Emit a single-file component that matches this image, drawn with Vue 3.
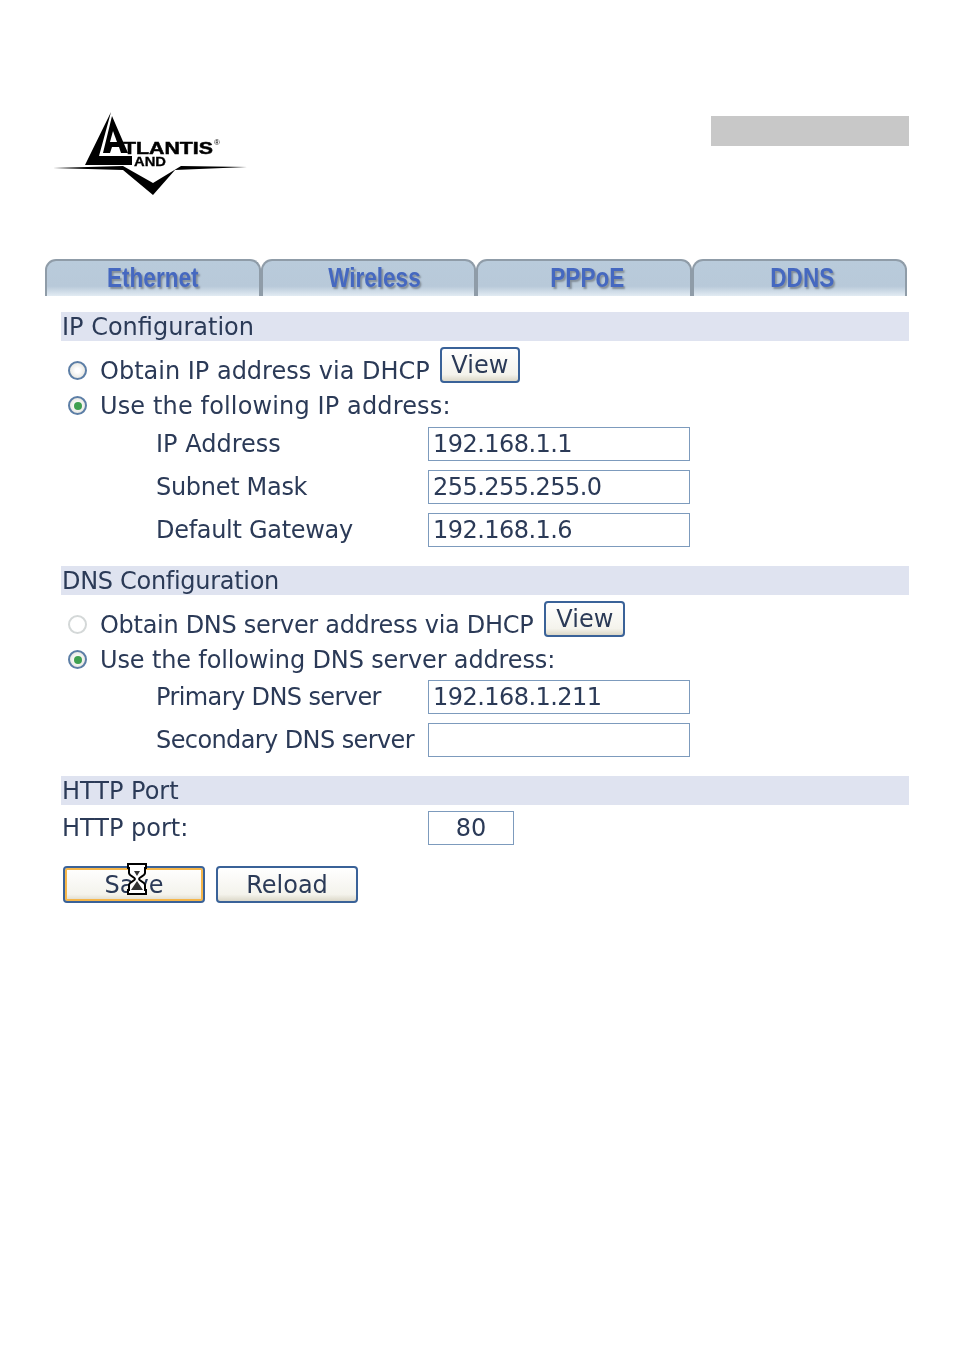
<template>
  <main class="page">
    <header class="top">
      <svg class="logo" width="196" height="86" viewBox="0 0 196 86">
        <polygon points="58,2 32,55 79,55 79,46 46,46" fill="#000" />
        <polygon points="59,6 50,43 57,43 59,37 66,37 68,43 75,43" fill="#000" />
        <polygon points="60,21 64,32 57,32" fill="#fff" />
        <text x="70" y="44" class="logo-main" textLength="90" lengthAdjust="spacingAndGlyphs">TLANTIS</text>
        <text x="81" y="55.5" class="logo-and" textLength="32" lengthAdjust="spacingAndGlyphs">AND</text>
        <text x="161" y="35" class="logo-reg">®</text>
        <polygon points="0,58 70,56 100,73 128,56 194,57 122,60 100,85 70,60" fill="#000" />
      </svg>
      <div class="grey-box"></div>
    </header>

    <nav class="tabs">
      <div v-for="tab in tabs" :key="tab" class="tab"><span>{{ tab }}</span></div>
    </nav>

    <section class="block">
      <h2>IP Configuration</h2>
      <div class="radio-row first">
        <span class="radio"></span>
        <span>Obtain IP address via DHCP</span>
        <button class="btn view">View</button>
      </div>
      <div class="radio-row second">
        <span class="radio on"></span>
        <span class="wide">Use the following IP address:</span>
      </div>
      <div v-for="f in ipFields" :key="f.label" class="field">
        <label :class="f.fit">{{ f.label }}</label>
        <div class="input">{{ f.value }}</div>
      </div>
    </section>

    <section class="block dns">
      <h2 class="tight">DNS Configuration</h2>
      <div class="radio-row first">
        <span class="radio off"></span>
        <span class="tight">Obtain DNS server address via DHCP</span>
        <button class="btn view">View</button>
      </div>
      <div class="radio-row second">
        <span class="radio on"></span>
        <span class="slight">Use the following DNS server address:</span>
      </div>
      <div v-for="f in dnsFields" :key="f.label" class="field">
        <label :class="f.fit">{{ f.label }}</label>
        <div class="input">{{ f.value }}</div>
      </div>
    </section>

    <section class="block http">
      <h2>HTTP Port</h2>
      <div class="port-row">
        <label>HTTP port:</label>
        <div class="input port">80</div>
      </div>
    </section>

    <div class="actions">
      <button class="btn big focus">
        Save
        <svg class="hourglass" width="20" height="32" viewBox="0 0 20 32">
          <path d="M1 1h18v4h-1v5c0 3-6 4-6 6s6 3 6 6v5h1v4H1v-4h1v-5c0-3 6-4 6-6s-6-3-6-6V5H1z" fill="#fff" stroke="#000" stroke-width="2" />
          <path d="M7 8h6l-3 5zM10 18l6 9H4z" fill="#333" />
        </svg>
      </button>
      <button class="btn big">Reload</button>
    </div>
  </main>
</template>

<script setup>
const tabs = ["Ethernet", "Wireless", "PPPoE", "DDNS"]

const ipFields = [
  { label: "IP Address", value: "192.168.1.1", fit: "" },
  { label: "Subnet Mask", value: "255.255.255.0", fit: "tight" },
  { label: "Default Gateway", value: "192.168.1.6", fit: "tight" },
]

const dnsFields = [
  { label: "Primary DNS server", value: "192.168.1.211", fit: "tighter" },
  { label: "Secondary DNS server", value: "", fit: "tighter" },
]
</script>

<style>
body {
  background: #fff;
}
</style>

<style scoped>
.page {
  width: 954px;
  height: 1350px;
  box-sizing: border-box;
  padding-top: 110px;
  font-family: "DejaVu Sans", sans-serif;
  font-size: 24px;
  color: #2b3a57;
  overflow: hidden;
  filter: blur(0.4px);
}

.top {
  display: flex;
  justify-content: space-between;
  align-items: flex-start;
  height: 149px;
  padding: 0 45px 0 53px;
}

.logo-main {
  font: bold 17px "Liberation Sans", sans-serif;
  stroke: #000;
  stroke-width: 0.5px;
}

.logo-and {
  font: bold 12px "Liberation Sans", sans-serif;
  stroke: #000;
  stroke-width: 0.3px;
}

.logo-reg {
  font: 8px "Liberation Sans", sans-serif;
}

.grey-box {
  width: 198px;
  height: 30px;
  margin-top: 6px;
  background: #c8c8c8;
}

.tabs {
  display: flex;
  width: 862px;
  height: 37px;
  margin-left: 45px;
}

.tab {
  flex: none;
  width: 25%;
  display: flex;
  align-items: center;
  justify-content: center;
  box-sizing: border-box;
  border: 2px solid #8f9ca8;
  border-bottom: none;
  border-radius: 11px 11px 0 0;
  background: linear-gradient(#b9cbdb 0%, #b8c9d9 72%, #e2ebf3 100%);
  font: bold 27px "Liberation Sans", sans-serif;
  color: #4568c0;
  text-shadow: 2px 2px 2px #828d98;
}

.tab:nth-child(2) {
  padding-left: 12px;
}

.tab:nth-child(3) {
  padding-left: 8px;
}

.tab:nth-child(4) {
  padding-left: 6px;
}

.tab span {
  display: inline-block;
  transform: scaleX(0.835);
}

.block {
  width: 848px;
  margin: 16px 0 0 61px;
}

.block h2 {
  height: 29px;
  margin: 0;
  padding-left: 1px;
  background: #dfe3f0;
  font-size: 24px;
  font-weight: normal;
  line-height: 31px;
}

.radio-row {
  display: flex;
  align-items: center;
  height: 35px;
  padding-left: 7px;
}

.radio-row.first {
  margin-top: 12px;
}

.radio-row.second {
  margin-bottom: -1px;
}

.radio {
  position: relative;
  flex: none;
  box-sizing: border-box;
  width: 19px;
  height: 19px;
  margin-right: 13px;
  border: 2px solid #5c7ea6;
  border-radius: 50%;
  background: radial-gradient(#fff 20%, #dcdcd4);
}

.radio.on::after {
  content: "";
  position: absolute;
  inset: 3.5px;
  border-radius: 50%;
  background: #3fa050;
}

.radio.off {
  border-color: #d4d8d8;
  background: #fff;
}

.wide {
  letter-spacing: 0.14px;
}

.slight {
  letter-spacing: -0.14px;
}

.tight {
  letter-spacing: -0.3px;
}

.tighter {
  letter-spacing: -0.6px;
}

.field {
  display: flex;
  align-items: center;
  height: 43px;
  padding-left: 95px;
}

.field label {
  width: 272px;
  flex: none;
}

.input {
  box-sizing: border-box;
  width: 262px;
  height: 34px;
  padding-left: 4px;
  border: 1px solid #7d9bbd;
  letter-spacing: -0.55px;
  line-height: 33px;
}

.dns {
  margin-top: 15px;
}

.dns .second {
  margin-bottom: -2px;
}

.http {
  margin-top: 15px;
}

.port-row {
  display: flex;
  align-items: center;
  height: 34px;
  margin-top: 6px;
  padding-left: 1px;
}

.port-row label {
  width: 366px;
}

.input.port {
  width: 86px;
  padding: 0;
  letter-spacing: 0;
  text-align: center;
}

.actions {
  display: flex;
  gap: 11px;
  margin: 21px 0 0 63px;
}

.btn {
  position: relative;
  box-sizing: border-box;
  padding: 0;
  border: 2px solid #3a6298;
  border-radius: 4px;
  background: linear-gradient(#fff, #f4f3ec 80%, #dcd8c8);
  font: inherit;
  color: inherit;
}

.view {
  width: 80px;
  height: 36px;
  margin: -12px 0 0 10px;
  line-height: 28px;
}

.dns .view {
  width: 81px;
  margin-left: 11px;
}

.big {
  width: 142px;
  height: 37px;
}

.focus {
  box-shadow: inset 0 0 0 2px #f5b64a;
}

.hourglass {
  position: absolute;
  left: 62px;
  top: -5px;
}
</style>
